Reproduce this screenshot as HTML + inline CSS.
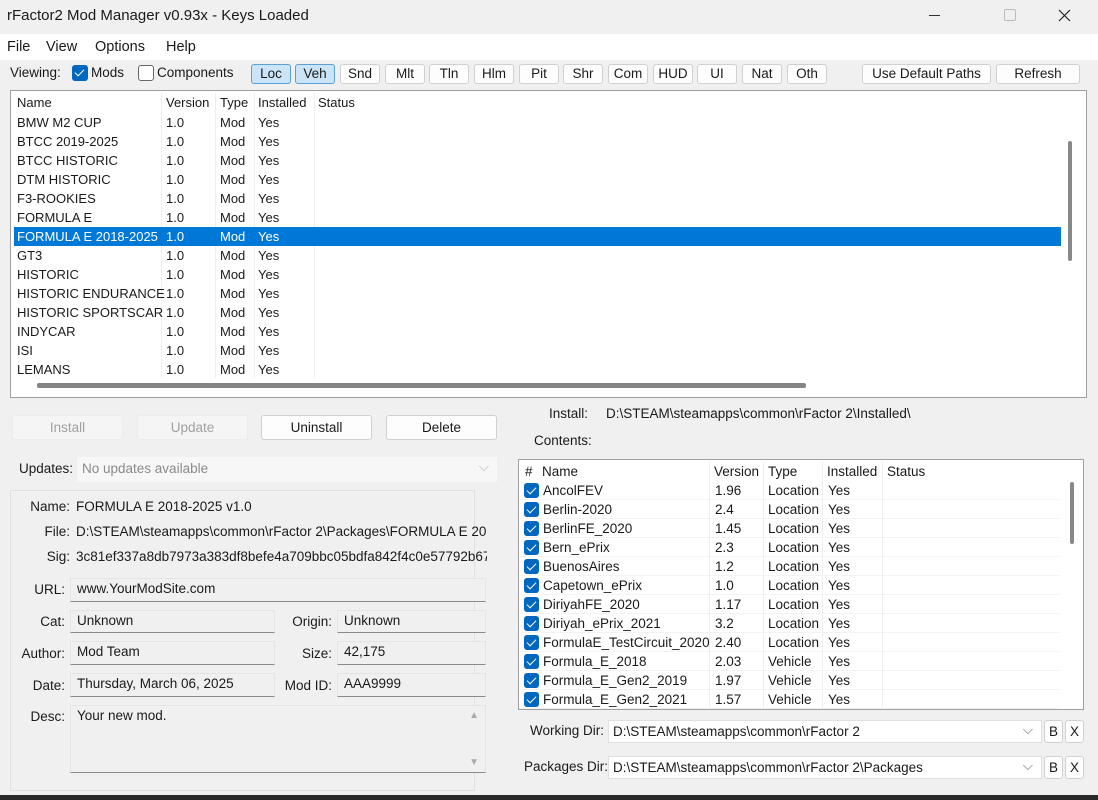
<!DOCTYPE html>
<html><head><meta charset="utf-8"><style>
*{box-sizing:border-box;margin:0;padding:0}
body{width:1098px;height:800px;background:#f0f0f0;font-family:"Liberation Sans",sans-serif;font-size:13.5px;color:#1a1a1a;position:relative;overflow:hidden}
.a{position:absolute;white-space:nowrap}
.btn{position:absolute;background:#fdfdfd;border:1px solid #d0d0d0;border-radius:3px;text-align:center;font-size:13.5px}
.tb{top:64px;height:20px;line-height:18px;width:40px}
.on{background:#cce4f7;border-color:#5a9fd6}
.dis{color:#a0a0a0;background:#f5f5f5;border-color:#ececec}
.cb{position:absolute;width:16px;height:16px;border-radius:3px;background:#0067c0}
.cb:after{content:"";position:absolute;left:5px;top:2px;width:4px;height:8px;border:solid #fff;border-width:0 1.3px 1.3px 0;transform:rotate(45deg)}
.fld{position:absolute;background:#f0f0f0;border:1px solid #e4e4e4;border-bottom:1px solid #8a8a8a;padding:2px 6px;font-size:13.5px}
.lbl{position:absolute;text-align:right;white-space:nowrap}
.row{position:absolute;left:0;height:19px;line-height:19px;white-space:nowrap}
.row span,.hd span{position:absolute}
</style></head><body>
<!-- title -->
<div class="a" style="left:7px;top:7px;font-size:15px">rFactor2 Mod Manager v0.93x - Keys Loaded</div>
<div class="a" style="left:929px;top:15px;width:11px;border-top:1px solid #333"></div>
<div class="a" style="left:1004px;top:9px;width:12px;height:12px;border:1px solid #bbb;border-radius:2px"></div>
<svg class="a" style="left:1058px;top:9px" width="13" height="13"><path d="M1 1L12 12M12 1L1 12" stroke="#222" stroke-width="1.2"/></svg>
<!-- menu -->
<div class="a" style="left:0;top:34px;width:1098px;height:26px;background:#fff"></div>
<div class="a" style="left:7px;top:39px;font-size:14.5px">File</div>
<div class="a" style="left:46px;top:39px;font-size:14.5px">View</div>
<div class="a" style="left:95px;top:39px;font-size:14.5px">Options</div>
<div class="a" style="left:166px;top:39px;font-size:14.5px">Help</div>
<!-- toolbar -->
<div class="a" style="left:10px;top:65px">Viewing:</div>
<div class="cb" style="left:72px;top:65px"></div>
<div class="a" style="left:91px;top:65px">Mods</div>
<div class="a" style="left:138px;top:65px;width:16px;height:16px;border:1px solid #666;border-radius:3px;background:#fff"></div>
<div class="a" style="left:157px;top:65px">Components</div>
<div class="btn tb on" style="left:251px">Loc</div>
<div class="btn tb on" style="left:295px">Veh</div>
<div class="btn tb" style="left:340px">Snd</div>
<div class="btn tb" style="left:385px">Mlt</div>
<div class="btn tb" style="left:429px">Tln</div>
<div class="btn tb" style="left:474px">Hlm</div>
<div class="btn tb" style="left:519px">Pit</div>
<div class="btn tb" style="left:563px">Shr</div>
<div class="btn tb" style="left:608px">Com</div>
<div class="btn tb" style="left:653px">HUD</div>
<div class="btn tb" style="left:697px">UI</div>
<div class="btn tb" style="left:742px">Nat</div>
<div class="btn tb" style="left:787px">Oth</div>
<div class="btn tb" style="left:862px;width:129px">Use Default Paths</div>
<div class="btn tb" style="left:996px;width:84px">Refresh</div>
<!-- top list -->
<div class="a" style="left:10px;top:90px;width:1077px;height:308px;background:#fff;border:1px solid #a0a0a0;overflow:hidden;font-size:13px">
 <div class="a" style="left:150px;top:2px;width:1px;height:285px;background:#eee"></div>
 <div class="a" style="left:204px;top:2px;width:1px;height:285px;background:#eee"></div>
 <div class="a" style="left:243px;top:2px;width:1px;height:285px;background:#eee"></div>
 <div class="a" style="left:303px;top:2px;width:1px;height:285px;background:#eee"></div>
 <div class="row hd" style="top:2px;width:1050px"><span style="left:6px">Name</span><span style="left:155px">Version</span><span style="left:209px">Type</span><span style="left:247px">Installed</span><span style="left:307px">Status</span></div>
 <div id="rows"></div>
 <div class="a" style="left:1057px;top:50px;width:4px;height:120px;background:#888;border-radius:2px"></div>
 <div class="a" style="left:26px;top:292px;width:769px;height:5px;background:#858585;border-radius:2px"></div>
</div>
<!-- action buttons -->
<div class="btn dis" style="left:12px;top:415px;width:111px;height:25px;line-height:23px">Install</div>
<div class="btn dis" style="left:137px;top:415px;width:111px;height:25px;line-height:23px">Update</div>
<div class="btn" style="left:261px;top:415px;width:111px;height:25px;line-height:23px">Uninstall</div>
<div class="btn" style="left:386px;top:415px;width:111px;height:25px;line-height:23px">Delete</div>
<div class="a" style="left:19px;top:461px">Updates:</div>
<div class="a" style="left:77px;top:457px;width:420px;height:25px;background:#f7f7f7;color:#8a8a8a;padding:4px 5px">No updates available<span style="position:absolute;right:8px;top:2px;color:#bbb">⌵</span></div>
<!-- details -->
<div class="a" style="left:10px;top:490px;width:465px;height:301px;border:1px solid #e0e0e0"></div>
<div class="lbl" style="right:1028px;top:499px">Name:</div><div class="a" style="left:76px;top:499px">FORMULA E 2018-2025 v1.0</div>
<div class="lbl" style="right:1028px;top:524px">File:</div><div class="a" style="left:76px;top:524px;width:411px;overflow:hidden">D:\STEAM\steamapps\common\rFactor 2\Packages\FORMULA E 2018-2025</div>
<div class="lbl" style="right:1028px;top:549px">Sig:</div><div class="a" style="left:76px;top:549px;width:411px;overflow:hidden">3c81ef337a8db7973a383df8befe4a709bbc05bdfa842f4c0e57792b670a1</div>
<div class="lbl" style="right:1033px;top:582px">URL:</div><div class="fld" style="left:70px;top:578px;width:416px;height:24px">www.YourModSite.com</div>
<div class="lbl" style="right:1033px;top:614px">Cat:</div><div class="fld" style="left:70px;top:610px;width:205px;height:23px">Unknown</div>
<div class="lbl" style="right:766px;top:614px">Origin:</div><div class="fld" style="left:337px;top:610px;width:149px;height:23px">Unknown</div>
<div class="lbl" style="right:1033px;top:646px">Author:</div><div class="fld" style="left:70px;top:641px;width:205px;height:24px">Mod Team</div>
<div class="lbl" style="right:766px;top:646px">Size:</div><div class="fld" style="left:337px;top:641px;width:149px;height:24px">42,175</div>
<div class="lbl" style="right:1033px;top:678px">Date:</div><div class="fld" style="left:70px;top:673px;width:205px;height:24px">Thursday, March 06, 2025</div>
<div class="lbl" style="right:766px;top:678px">Mod ID:</div><div class="fld" style="left:337px;top:673px;width:149px;height:24px">AAA9999</div>
<div class="lbl" style="right:1033px;top:709px">Desc:</div><div class="fld" style="left:70px;top:705px;width:416px;height:68px">Your new mod.<span style="position:absolute;right:6px;top:4px;color:#aaa;font-size:10px">▲</span><span style="position:absolute;right:6px;bottom:4px;color:#aaa;font-size:10px">▼</span></div>
<!-- right -->
<div class="a" style="left:549px;top:406px">Install:</div>
<div class="a" style="left:606px;top:406px">D:\STEAM\steamapps\common\rFactor 2\Installed\</div>
<div class="a" style="left:534px;top:433px">Contents:</div>
<div class="a" style="left:518px;top:459px;width:566px;height:251px;background:#fff;border:1px solid #a0a0a0;overflow:hidden">
 <div class="a" style="left:190px;top:2px;width:1px;height:250px;background:#eee"></div>
 <div class="a" style="left:244px;top:2px;width:1px;height:250px;background:#eee"></div>
 <div class="a" style="left:303px;top:2px;width:1px;height:250px;background:#eee"></div>
 <div class="a" style="left:363px;top:2px;width:1px;height:250px;background:#eee"></div>
 <div class="row hd" style="top:2px;width:540px"><span style="left:6px">#</span><span style="left:23px">Name</span><span style="left:195px">Version</span><span style="left:249px">Type</span><span style="left:308px">Installed</span><span style="left:368px">Status</span></div>
 <div id="crows"></div>
 <div class="a" style="left:551px;top:22px;width:4px;height:62px;background:#888;border-radius:2px"></div>
</div>
<div class="a" style="left:530px;top:723px">Working Dir:</div>
<div class="a" style="left:608px;top:720px;width:434px;height:23px;background:#fff;border:1px solid #e0e0e0;padding:3px 4px">D:\STEAM\steamapps\common\rFactor 2<span style="position:absolute;right:8px;top:1px;color:#777">⌵</span></div>
<div class="btn" style="left:1044px;top:720px;width:19px;height:23px;line-height:21px">B</div>
<div class="btn" style="left:1065px;top:720px;width:19px;height:23px;line-height:21px">X</div>
<div class="a" style="left:524px;top:759px">Packages Dir:</div>
<div class="a" style="left:608px;top:756px;width:434px;height:23px;background:#fff;border:1px solid #e0e0e0;padding:3px 4px">D:\STEAM\steamapps\common\rFactor 2\Packages<span style="position:absolute;right:8px;top:1px;color:#777">⌵</span></div>
<div class="btn" style="left:1044px;top:756px;width:19px;height:23px;line-height:21px">B</div>
<div class="btn" style="left:1065px;top:756px;width:19px;height:23px;line-height:21px">X</div>
<div class="a" style="left:0;top:795px;width:1098px;height:5px;background:#2a2a2a"></div>
<script>
var m=["BMW M2 CUP","BTCC 2019-2025","BTCC HISTORIC","DTM HISTORIC","F3-ROOKIES","FORMULA E","FORMULA E 2018-2025","GT3","HISTORIC","HISTORIC ENDURANCE","HISTORIC SPORTSCAR","INDYCAR","ISI","LEMANS"],h="";
m.forEach(function(n,i){var s=i==6;h+='<div class="row" style="top:'+(22+i*19)+'px;width:1047px;left:3px;'+(s?'background:#0078d7;color:#fff':'')+'"><span style="left:3px">'+n+'</span><span style="left:152px">1.0</span><span style="left:206px">Mod</span><span style="left:244px">Yes</span></div>';});
document.getElementById("rows").innerHTML=h;
var c=[["AncolFEV","1.96","Location"],["Berlin-2020","2.4","Location"],["BerlinFE_2020","1.45","Location"],["Bern_ePrix","2.3","Location"],["BuenosAires","1.2","Location"],["Capetown_ePrix","1.0","Location"],["DiriyahFE_2020","1.17","Location"],["Diriyah_ePrix_2021","3.2","Location"],["FormulaE_TestCircuit_2020","2.40","Location"],["Formula_E_2018","2.03","Vehicle"],["Formula_E_Gen2_2019","1.97","Vehicle"],["Formula_E_Gen2_2021","1.57","Vehicle"]];h="";
c.forEach(function(r,i){h+='<div class="row" style="top:'+(21+i*19)+'px;width:540px;border-bottom:1px solid #f3f3f3"><div class="cb" style="left:5px;top:2px;width:15px;height:15px"></div><span style="left:24px">'+r[0]+'</span><span style="left:196px">'+r[1]+'</span><span style="left:249px">'+r[2]+'</span><span style="left:309px">Yes</span></div>';});
document.getElementById("crows").innerHTML=h;
</script>
</body></html>
